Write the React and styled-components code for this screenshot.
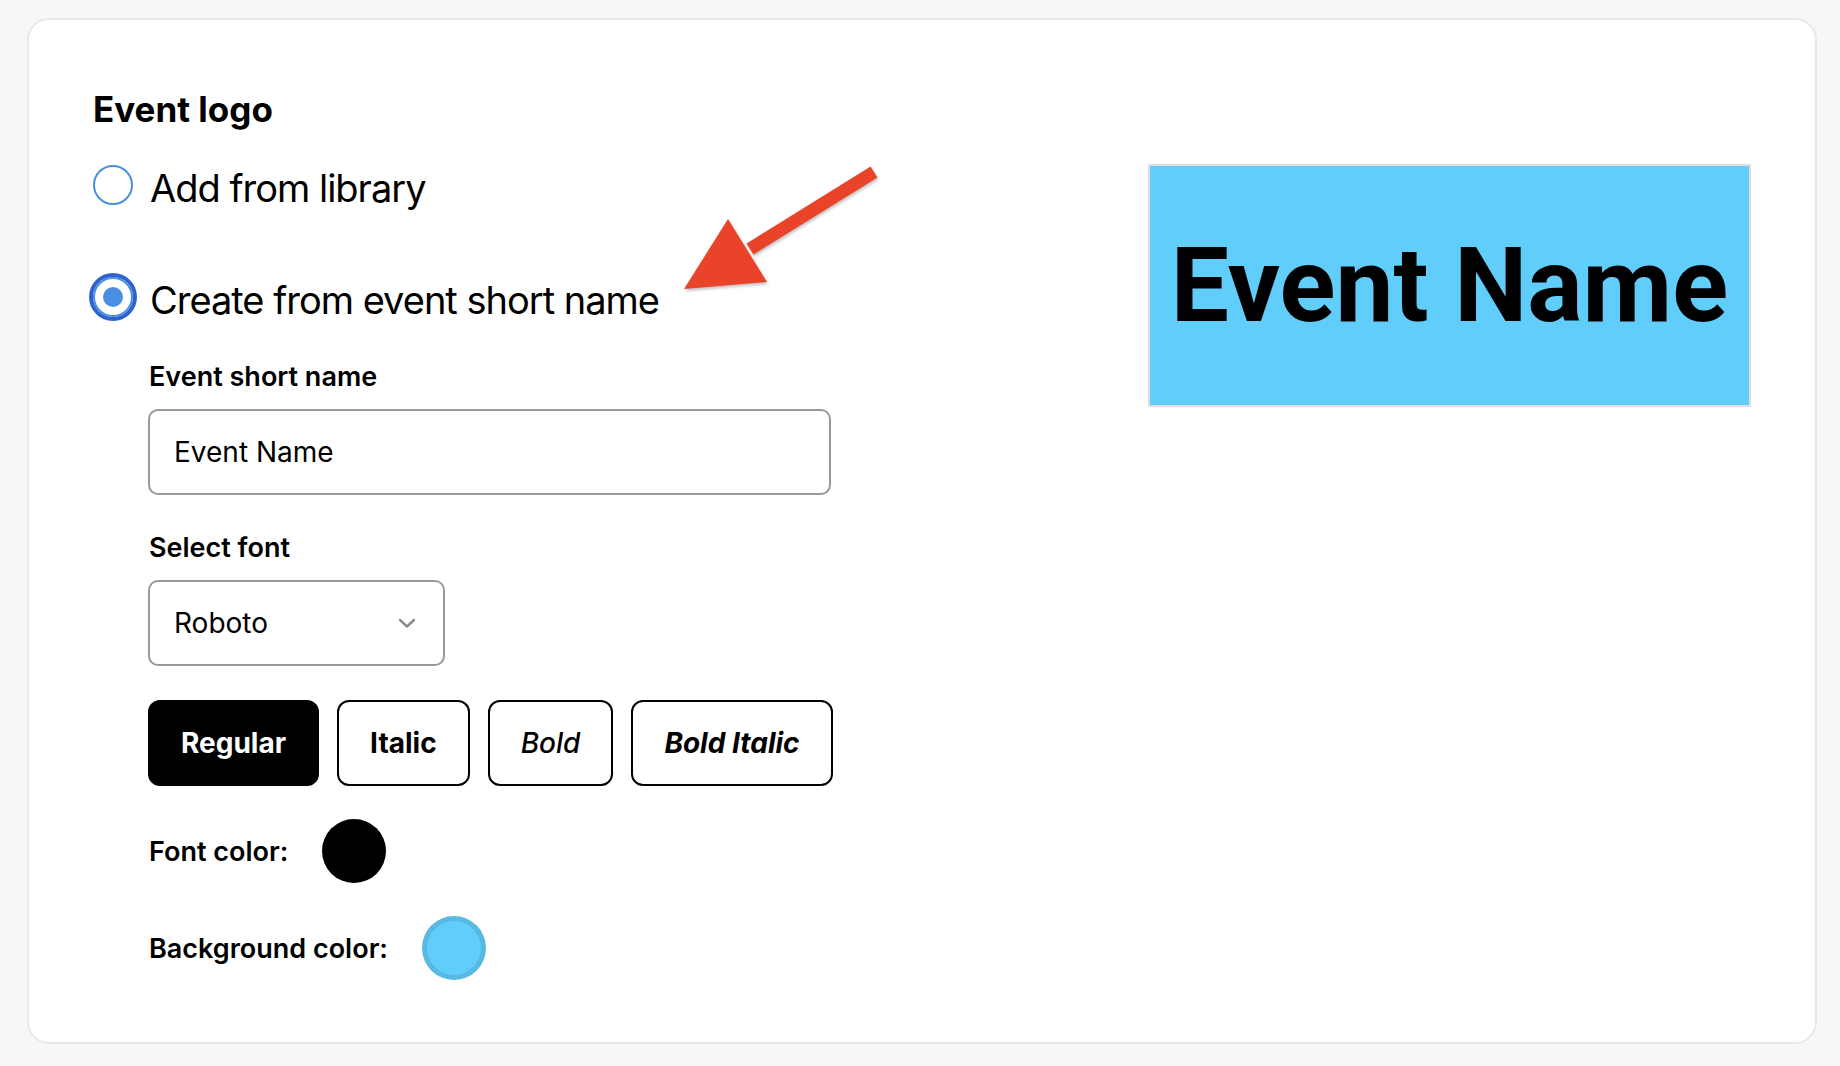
import React, { useState } from "react";
import styled, { createGlobalStyle } from "styled-components";

const GlobalStyle = createGlobalStyle`
  html, body {
    margin: 0;
    padding: 0;
    background: #f7f7f7;
  }
  body {
    font-family: Inter, "Noto Sans", sans-serif;
    color: #000;
  }
`;

const Page = styled.div`
  box-sizing: border-box;
  min-height: 1066px;
  padding: 18px 23px 22px 27px;
`;

const Card = styled.div`
  position: relative;
  box-sizing: border-box;
  height: 1026px;
  display: flex;
  justify-content: space-between;
  align-items: flex-start;
  padding: 72px 64px 63px;
  background: #fff;
  border: 2px solid #e9e9e9;
  border-radius: 22px;
`;

const Form = styled.div`
  display: flex;
  flex-direction: column;
`;

const Title = styled.h2`
  margin: 0;
  font-size: 35px;
  line-height: 34px;
  font-weight: 700;
`;

const RadioRow = styled.label`
  display: flex;
  align-items: center;
  gap: 17px;
  margin-top: ${(props) => props.offset}px;
  cursor: pointer;
`;

const Radio = styled.span`
  box-sizing: border-box;
  width: 40px;
  height: 40px;
  margin-bottom: 6px;
  display: flex;
  align-items: center;
  justify-content: center;
  border-radius: 50%;
  border: 2px solid #4a90e2;
  box-shadow: ${(props) => (props.checked ? "0 0 0 4px #2f62cc" : "none")};

  &::after {
    content: "";
    display: ${(props) => (props.checked ? "block" : "none")};
    width: 20px;
    height: 20px;
    border-radius: 50%;
    background: #4a90e2;
  }
`;

const RadioText = styled.span`
  font-size: 38px;
  line-height: 38px;
  font-weight: 400;
  letter-spacing: -1px;
`;

const Options = styled.div`
  display: flex;
  flex-direction: column;
  padding-left: 55px;
`;

const Field = styled.div`
  display: flex;
  flex-direction: column;
  gap: 19px;
  margin-top: ${(props) => props.offset}px;
`;

const Label = styled.span`
  font-size: 27px;
  line-height: 27px;
  font-weight: 600;
  padding-left: 1px;
`;

const TextInput = styled.input`
  box-sizing: border-box;
  width: 683px;
  height: 86px;
  padding: 0 24px;
  border: 2px solid #999;
  border-radius: 10px;
  font-family: Inter, sans-serif;
  font-size: 28px;
  color: #000;
  background: #fff;
  outline: none;
`;

const Select = styled.div`
  box-sizing: border-box;
  width: 297px;
  height: 86px;
  display: flex;
  align-items: center;
  justify-content: space-between;
  padding: 0 27px 0 24px;
  border: 2px solid #999;
  border-radius: 10px;
  font-size: 28px;
  cursor: pointer;
`;

const StyleGroup = styled.div`
  display: flex;
  gap: 18px;
  margin-top: 34px;
`;

const StyleButton = styled.button`
  box-sizing: border-box;
  height: 86px;
  padding: 0 31px;
  border: 2px solid #000;
  border-radius: 12px;
  font-family: Inter, sans-serif;
  font-size: 28px;
  font-weight: ${(props) => props.weight};
  font-style: ${(props) => (props.italic ? "italic" : "normal")};
  background: ${(props) => (props.active ? "#000" : "#fff")};
  color: ${(props) => (props.active ? "#fff" : "#000")};
  cursor: pointer;
`;

const ColorRow = styled.div`
  display: flex;
  align-items: center;
  gap: 34px;
  margin-top: 33px;
`;

const Swatch = styled.span`
  box-sizing: border-box;
  width: 64px;
  height: 64px;
  border-radius: 50%;
  background: ${(props) => props.color};
  border: 5px solid rgba(0, 0, 0, 0.09);
`;

const Preview = styled.div`
  box-sizing: border-box;
  width: 603px;
  height: 243px;
  margin-top: 72px;
  display: flex;
  align-items: center;
  justify-content: center;
  background: #61cdfa;
  border: 2px solid #dedede;
`;

const PreviewText = styled.span`
  font-family: Roboto, sans-serif;
  font-size: 103.5px;
  line-height: 1;
  font-weight: 700;
  color: #000;
  white-space: nowrap;
`;

const Arrow = styled.svg`
  position: absolute;
  left: 641px;
  top: 135px;
  filter: drop-shadow(1px 2px 1.5px rgba(0, 0, 0, 0.25));
  pointer-events: none;
`;

const styles = [
  { name: "Regular", weight: 700, italic: false },
  { name: "Italic", weight: 700, italic: false },
  { name: "Bold", weight: 500, italic: true },
  { name: "Bold Italic", weight: 700, italic: true },
];

export default function App() {
  const [mode, setMode] = useState("short");
  const [style, setStyle] = useState("Regular");

  return (
    <Page>
      <GlobalStyle />
      <Card>
        <Form>
          <Title>Event logo</Title>
          <RadioRow offset={39} onClick={() => setMode("library")}>
            <Radio checked={mode === "library"} />
            <RadioText>Add from library</RadioText>
          </RadioRow>
          <RadioRow offset={66} onClick={() => setMode("short")}>
            <Radio checked={mode === "short"} />
            <RadioText>Create from event short name</RadioText>
          </RadioRow>

          <Options>
            <Field offset={40}>
              <Label>Event short name</Label>
              <TextInput defaultValue="Event Name" />
            </Field>
            <Field offset={39}>
              <Label>Select font</Label>
              <Select>
                <span>Roboto</span>
                <svg width="18" height="11" viewBox="0 0 18 11">
                  <polyline
                    points="2,2 9,8.5 16,2"
                    fill="none"
                    stroke="#8a8a8a"
                    strokeWidth="2.4"
                    strokeLinecap="round"
                    strokeLinejoin="round"
                  />
                </svg>
              </Select>
            </Field>

            <StyleGroup>
              {styles.map((s) => (
                <StyleButton
                  key={s.name}
                  weight={s.weight}
                  italic={s.italic}
                  active={style === s.name}
                  onClick={() => setStyle(s.name)}
                >
                  {s.name}
                </StyleButton>
              ))}
            </StyleGroup>

            <ColorRow>
              <Label>Font color:</Label>
              <Swatch color="#000" />
            </ColorRow>
            <ColorRow>
              <Label>Background color:</Label>
              <Swatch color="#61cdfa" />
            </ColorRow>
          </Options>
        </Form>

        <Preview>
          <PreviewText>Event Name</PreviewText>
        </Preview>

        <Arrow width="220" height="145" viewBox="0 0 220 145">
          <line x1="204" y1="17" x2="80" y2="94" stroke="#e9432a" strokeWidth="13" />
          <polygon points="58,64 14,134 97,127" fill="#e9432a" />
        </Arrow>
      </Card>
    </Page>
  );
}
